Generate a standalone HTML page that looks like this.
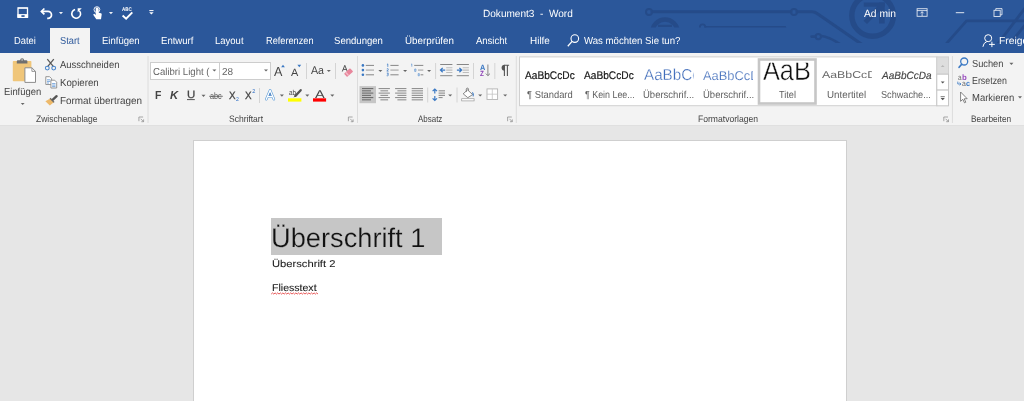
<!DOCTYPE html>
<html lang="de"><head><meta charset="utf-8"><title>Dokument3 - Word</title>
<style>
html,body{margin:0;padding:0;}
body{width:1024px;height:401px;overflow:hidden;position:relative;background:#e6e6e6;font-family:"Liberation Sans",sans-serif;}
.abs{position:absolute;}
#titlebar{position:absolute;left:0;top:0;width:1024px;height:53px;background:#2b579a;overflow:hidden;}
#tab-start{position:absolute;left:50px;top:28px;width:40px;height:25px;background:#f3f3f3;}
#ribbon{position:absolute;left:0;top:53px;width:1024px;height:72px;background:#f3f3f3;border-bottom:1px solid #e0e0e0;}
#docarea{position:absolute;left:0;top:126px;width:1024px;height:275px;background:#e6e6e6;}
#page{position:absolute;left:193px;top:140px;width:654px;height:270px;background:#fff;border:1px solid #cfcfcf;box-sizing:border-box;}
#sel{position:absolute;left:271.3px;top:217.9px;width:171.1px;height:37px;background:#c6c6c6;}
.t{position:absolute;white-space:pre;line-height:1;transform-origin:0 0;font-family:"Liberation Sans",sans-serif;}
.vsep{position:absolute;width:1px;background:#d9d9d9;}
svg{position:absolute;left:0;top:0;overflow:visible;}
#labels{position:absolute;left:0;top:0;width:1024px;height:401px;will-change:transform;}
.t{text-rendering:geometricPrecision;}

</style></head>
<body>
<div id="titlebar">
  <svg id="bgpattern" width="1024" height="42.5" viewBox="0 0 1024 42.5" style="overflow:hidden" fill="none" stroke="#254b89" stroke-linecap="round" stroke-linejoin="round">
    <!-- circuit pattern (Office background) -->
    <path d="M652 11.800 H791 M797 11.800 H812 Q815 11.800 817.500 13.800 L862 44.500" stroke-width="3.100"/>
    <circle cx="649" cy="11.900" r="3" stroke-width="2"/>
    <circle cx="794" cy="11.900" r="3" stroke-width="2"/>
    <clipPath id="cliptop"><rect x="0" y="0" width="1024" height="27.600"/></clipPath>
    <g clip-path="url(#cliptop)">
      <circle cx="665" cy="32" r="12.500" stroke-width="4.600"/>
      <path d="M658 25.900 H672" stroke-width="2.400" stroke-linecap="butt"/>
      <path d="M705.500 27.300 H785" stroke-width="2.400"/>
      <circle cx="702.600" cy="27" r="2.700" stroke-width="1.800"/>
    </g>
    <circle cx="818.300" cy="36.600" r="2.700" stroke-width="2"/>
    <path d="M811.500 36.600 H815 M821.500 36 Q828 36.500 840 44" stroke-width="2.600"/>
    <circle cx="872.600" cy="15.500" r="20.800" stroke-width="5.400"/>
    <path d="M865.300 22.400 L880 7" stroke-width="4.800" stroke-linecap="butt"/><rect x="863.800" y="2.500" width="20.900" height="4.200" fill="#254b89" stroke="none"/><rect x="879" y="2.500" width="5.700" height="21" fill="#254b89" stroke="none"/>
    <path d="M1026 20.900 H966.500 L945 45.200" stroke-width="2.700"/>
    <path d="M1025 8 L997 45 M1025 25 L1009 45" stroke-width="2.800"/>
  </svg>
  <div id="tab-start"></div>
  <svg id="qat" width="1024" height="53" viewBox="0 0 1024 53" fill="none" stroke="#fff" stroke-width="1.2">
    <!-- save -->
    <path d="M18 17.500 V8 H27.500 V17.500" stroke-width="1.300"/>
    <path d="M18 8 H27.500" stroke-width="0.9" stroke-opacity="0.800"/>
    <rect x="17.400" y="14.100" width="10.700" height="3.900" fill="#fff" stroke="none"/>
    <rect x="21.400" y="15.200" width="3.200" height="1.700" fill="#2b579a" stroke="none"/>
    <!-- undo -->
    <path d="M41.800 11.400 H48 A3.500 3.500 0 0 1 48 18.400 H47.200" stroke-width="1.700" stroke-linecap="butt"/>
    <path d="M44.400 8.500 L41.400 11.400 L44.400 14.300" stroke-width="1.700"/>
    <path d="M58.900 12 h4.100 l-2.050 2.200 z" fill="#fff" stroke="none" fill-opacity="0.9"/>
    <!-- redo / repeat -->
    <path d="M75.100 9.540 A4.400 4.400 0 1 0 79.300 10.700" stroke-width="1.600"/>
    <path d="M77.700 8.200 H81.800 L77.700 12.300 Z" fill="#fff" stroke="none"/>
    <!-- touch mode -->
    <path transform="translate(0.100,0.900)" d="M95.200 7.300 a1.900 1.900 0 0 1 3.400 1.300 v3.300 l2.300 .5 q.9 .3 .7 1.300 l-.7 4.600 h-4.700 l-2.900 -4.100 q-.5 -.9 .4 -1.200 q.7 -.2 1.300 .5 l.6 .700 v-5.600 q0 -.9 .9 -.9 q.9 0 .9 .9" fill="#fff" stroke="none"/>
    <circle cx="96.900" cy="9.600" r="2.900" stroke-width="0.9"/>
    <path d="M108.900 12.100 h4.100 l-2.050 2.200 z" fill="#fff" stroke="none" fill-opacity="0.9"/>
    <!-- spelling -->
    <path d="M122.600 15.500 L126.100 18.700 L132.300 12.300" stroke-width="1.900"/>
    <!-- customize -->
    <path d="M149.300 10.600 h4.200" stroke-width="1"/>
    <path d="M149.200 12.300 h4.400 l-2.200 2.300 z" fill="#fff" stroke="none"/>
    <!-- tell me magnifier -->
    <circle cx="574.800" cy="38.600" r="3.800" stroke-width="1.100"/>
    <path d="M572.100 41.400 L567.800 46.200" stroke-width="1.300"/>
    <!-- ribbon display options -->
    <rect x="917.100" y="8.700" width="10" height="7.600" stroke-width="0.9" stroke-opacity="0.85"/>
    <path d="M917.100 10.600 h10" stroke-width="0.9" stroke-opacity="0.85"/>
    <path d="M922.100 16 v-4.300 m-1.700 1.700 l1.700 -1.700 l1.700 1.700" stroke-width="0.8" stroke-opacity="0.9"/>
    <!-- minimize -->
    <path d="M955.800 12.700 h8.400" stroke-width="1" stroke-opacity="0.85"/>
    <!-- restore -->
    <rect x="994" y="10.300" width="6.200" height="6.200" stroke-width="0.9" stroke-opacity="0.85"/>
    <path d="M995.800 10.300 v-1.700 h6.200 v6.200 h-1.800" stroke-width="0.9" stroke-opacity="0.85"/>
    <!-- share -->
    <circle cx="988.200" cy="38.200" r="3.500" stroke-width="1"/>
    <path d="M982.900 46.800 q.5 -4 3.900 -5.200" stroke-width="1"/>
    <path d="M989 44.400 h5.800 m-2.900 -2.700 v5.400" stroke-width="1"/>
  </svg>
</div>
<div id="ribbon"></div>
<svg id="ribbonicons" width="1024" height="401" viewBox="0 0 1024 401" fill="none">
<path d="M148 56 V123" stroke="#dcdcdc" stroke-width="1"/>
<path d="M357.5 56 V123" stroke="#dcdcdc" stroke-width="1"/>
<path d="M516.3 56 V123" stroke="#dcdcdc" stroke-width="1"/>
<path d="M952.4 56 V123" stroke="#dcdcdc" stroke-width="1"/>
<!-- paste -->
<rect x="12.8" y="61" width="18.6" height="20.3" rx="0.8" fill="#f0c67a"/>
<path d="M16.8 63.600 v-2.400 q0 -1 1 -1 h2.300 q.1 -2 2 -2 q1.900 0 2 2 h2.300 q1 0 1 1 v2.400 z" fill="#6f6f6f"/>
<circle cx="22.100" cy="59.900" r="0.700" fill="#f3f3f3"/>
<path d="M24.900 67.800 h7 l3.600 3.600 v11 h-10.600 z" fill="#fff" stroke="#8c8c8c" stroke-width="1"/>
<path d="M31.900 67.800 v3.600 h3.600" stroke="#8c8c8c" stroke-width="0.9"/>
<path d="M20.80 102.90 h3.8 l-1.9 2.0 z" fill="#666" stroke="none"/>
<!-- cut -->
<path d="M47.300 59.200 L53.500 66.600 M53.800 59.200 L47.600 66.600" stroke="#5a5a5a" stroke-width="1.300"/>
<circle cx="47.300" cy="68.100" r="1.900" stroke="#4a86cc" stroke-width="1.100"/>
<circle cx="53.700" cy="68.100" r="1.900" stroke="#4a86cc" stroke-width="1.100"/>
<!-- copy -->
<path d="M45.800 76.700 h3.800 l2 2 v5.800 h-5.800 z" fill="#fff" stroke="#8a8a8a" stroke-width="0.9"/>
<path d="M47 79.800 h3.400 M47 81.400 h3.400 M47 83 h2" stroke="#5b93d3" stroke-width="0.8"/>
<path d="M50.900 80.200 h3.800 l2 2 v5.800 h-5.800 z" fill="#fff" stroke="#8a8a8a" stroke-width="0.9"/>
<path d="M52.100 83.600 h3.400 M52.100 85.100 h3.400 M52.100 86.600 h3.400" stroke="#5b93d3" stroke-width="0.8"/>
<!-- format painter -->
<path d="M56.600 96.200 L52.600 99.800" stroke="#555" stroke-width="2.400" stroke-linecap="round"/>
<path d="M50.300 98.600 L53.800 102.300 L49.800 105.400 L45.400 101.200 Z" fill="#edb96a"/>
<path d="M50.100 98.300 L54.100 102.400" stroke="#666" stroke-width="1.300"/>
<path d="M138.90 121.20 V117.00 H143.10" stroke="#858585" stroke-width="0.7" fill="none"/><path d="M140.70 118.80 L143.40 121.50 M143.60 119.40 V121.70 H141.30" stroke="#858585" stroke-width="0.7" fill="none"/>
<!-- font combos -->
<rect x="150.500" y="62.500" width="120" height="17" fill="#fff" stroke="#cdcdcd" stroke-width="1"/>
<path d="M219.500 62.500 v17" stroke="#cdcdcd" stroke-width="1"/>
<path d="M212.40 69.40 h4 l-2.0 2.2 z" fill="#666" stroke="none"/>
<path d="M264.00 69.40 h4 l-2.0 2.2 z" fill="#666" stroke="none"/>
<path d="M281.100 67.200 h3.800 l-1.900 -2.400 z" fill="#3a78c3"/>
<path d="M297.400 64.800 h3.800 l-1.900 2.400 z" fill="#3a78c3"/>
<path d="M306.5 63 V79" stroke="#d4d4d4" stroke-width="1"/>
<path d="M326.80 69.90 h4 l-2.0 2.2 z" fill="#666" stroke="none"/>
<path d="M335.5 63 V79" stroke="#d4d4d4" stroke-width="1"/>
<!-- clear formatting -->
<path d="M342.300 71.500 L344.800 65.300 L347.300 71.500 M343.200 69.400 H346.400" stroke="#555" stroke-width="1"/>
<g transform="rotate(-42 348.600 72.600)"><rect x="344.500" y="70.300" width="8.200" height="4.600" rx="0.7" fill="#e8869c"/><rect x="346" y="70.300" width="1.300" height="4.600" fill="#f4bcc8"/></g>
<path d="M187 99.600 h7.800" stroke="#444" stroke-width="0.9"/>
<path d="M201.50 94.80 h4 l-2.0 2.2 z" fill="#666" stroke="none"/>
<path d="M209.200 96.300 h13.600" stroke="#555" stroke-width="0.8"/>
<path d="M259.5 88 V103" stroke="#d4d4d4" stroke-width="1"/>
<!-- text effects -->
<path d="M266.300 99.300 L270.100 90.200 L273.900 99.300 M267.700 96.300 H272.500" stroke="#5b9bd8" stroke-width="2.500" stroke-linejoin="round" stroke-linecap="round"/>
<path d="M266.300 99.300 L270.100 90.200 L273.900 99.300 M267.700 96.300 H272.500" stroke="#fff" stroke-width="1.300" stroke-linejoin="round" stroke-linecap="round"/>
<path d="M269 96 L270.100 93.400 L271.200 96" stroke="#2e66b0" stroke-width="0.600"/>
<path d="M279.90 94.60 h4 l-2.0 2.2 z" fill="#666" stroke="none"/>
<!-- highlight -->
<path d="M300.700 90.200 L295.400 95.900" stroke="#555" stroke-width="2.300" stroke-linecap="round"/>
<path d="M295.200 95.200 L293.400 97.600 L296 96.600 Z" fill="#555"/>
<rect x="288" y="98.300" width="13.400" height="3.300" fill="#ffff00"/>
<path d="M305.30 94.60 h4 l-2.0 2.2 z" fill="#666" stroke="none"/>
<rect x="313" y="98.300" width="13.100" height="3.300" fill="#ff0000"/>
<path d="M330.30 94.60 h4 l-2.0 2.2 z" fill="#666" stroke="none"/>
<path d="M348.40 121.20 V117.00 H352.60" stroke="#858585" stroke-width="0.7" fill="none"/><path d="M350.20 118.80 L352.90 121.50 M353.10 119.40 V121.70 H350.80" stroke="#858585" stroke-width="0.7" fill="none"/>
<!-- bullets -->
<circle cx="362.900" cy="65.4" r="1.300" fill="#3a78c3"/>
<circle cx="362.900" cy="70.1" r="1.300" fill="#3a78c3"/>
<circle cx="362.900" cy="74.8" r="1.300" fill="#3a78c3"/>
<path d="M365.800 65.400 h8.200 M365.800 74.800 h8.200" stroke="#6a6a6a" stroke-width="0.8"/>
<path d="M365.800 70.100 h8.200" stroke="#bdbdbd" stroke-width="1.600"/>
<path d="M378.40 69.90 h4 l-2.0 2.2 z" fill="#666" stroke="none"/>
<!-- numbering -->
<path d="M390.400 65.400 h8.200 M390.400 74.800 h8.200" stroke="#6a6a6a" stroke-width="0.8"/>
<path d="M390.400 70.100 h8.200" stroke="#bdbdbd" stroke-width="1.600"/>
<path d="M386.900 64.600 l.9 -.700 v3 M386.800 68.900 q1.100 -.8 1.500 0 q.2 .7 -1.500 2.200 h1.800 M386.800 73.100 h1.600 l-.9 1.200 q1.100 0 1 .9 q-.3 .9 -1.800 .5" stroke="#3a78c3" stroke-width="0.750"/>
<path d="M403.10 69.90 h4 l-2.0 2.2 z" fill="#666" stroke="none"/>
<!-- multilevel -->
<path d="M414.200 65.400 h9.100 M420.600 74.800 h2.700" stroke="#6a6a6a" stroke-width="0.8"/>
<path d="M418 70.100 h5.300" stroke="#bdbdbd" stroke-width="1.600"/>
<path d="M411 64.600 l.8 -.700 v2.800 M414.700 69 h1.200 v2.400 h-1.200 z M418.200 73.600 h1.100 v2.200 h-1.100 z" stroke="#5b93d3" stroke-width="0.700"/>
<path d="M427.10 69.90 h4 l-2.0 2.2 z" fill="#666" stroke="none"/>
<path d="M435.6 63 V79" stroke="#d4d4d4" stroke-width="1"/>
<!-- decrease indent -->
<path d="M440.200 64.500 h12.200 M440.200 75.700 h12.200" stroke="#6a6a6a" stroke-width="0.8"/>
<path d="M446.200 67.700 h6.200 M446.200 70.100 h6.200 M446.200 72.500 h6.200" stroke="#bdbdbd" stroke-width="1.100"/>
<path d="M445.200 70.100 h-4.300 M442.700 67.900 l-2.200 2.200 l2.200 2.200" stroke="#3a78c3" stroke-width="1.300"/>
<!-- increase indent -->
<path d="M456.700 64.500 h12.200 M456.700 75.700 h12.200" stroke="#6a6a6a" stroke-width="0.8"/>
<path d="M462.700 67.700 h6.200 M462.700 70.100 h6.200 M462.700 72.500 h6.200" stroke="#bdbdbd" stroke-width="1.100"/>
<path d="M456.900 70.100 h4.300 M459.400 67.900 l2.200 2.200 l-2.200 2.200" stroke="#3a78c3" stroke-width="1.300"/>
<path d="M473.5 63 V79" stroke="#d4d4d4" stroke-width="1"/>
<!-- sort -->
<path d="M487.900 64.500 v11 M485.800 73.600 l2.100 2.100 l2.100 -2.100" stroke="#6a6a6a" stroke-width="0.8"/>
<path d="M494.8 63 V79" stroke="#d4d4d4" stroke-width="1"/>
<!-- pilcrow -->
<path d="M504.400 65.200 v10.700 M507.400 65.200 v10.700 M509.100 65.200 h-5" stroke="#555" stroke-width="1.100"/>
<path d="M504.600 64.700 a3 3 0 0 0 0 6 z" fill="#555"/>
<rect x="359.500" y="86.100" width="16.500" height="17.100" fill="#c6c6c6"/>
<path d="M362.00 88.6 H373.30 M362.00 90.85 H371.00 M362.00 93.1 H373.30 M362.00 95.35 H371.00 M362.00 97.6 H373.30 M362.00 99.85 H371.00" stroke="#5a5a5a" stroke-width="0.9"/>
<path d="M378.60 88.6 H389.90 M380.40 90.85 H388.10 M378.60 93.1 H389.90 M380.40 95.35 H388.10 M378.60 97.6 H389.90 M380.40 99.85 H388.10" stroke="#6a6a6a" stroke-width="0.8"/>
<path d="M395.10 88.6 H406.40 M397.40 90.85 H406.40 M395.10 93.1 H406.40 M397.40 95.35 H406.40 M395.10 97.6 H406.40 M397.40 99.85 H406.40" stroke="#6a6a6a" stroke-width="0.8"/>
<path d="M411.70 88.6 H423.00 M411.70 90.85 H423.00 M411.70 93.1 H423.00 M411.70 95.35 H423.00 M411.70 97.6 H423.00 M411.70 99.85 H423.00" stroke="#6a6a6a" stroke-width="0.8"/>
<path d="M427.7 87.5 V102.5" stroke="#d4d4d4" stroke-width="1"/>
<!-- line spacing -->
<path d="M434.800 89 v4.500 M434.800 96 v4.500 M432.600 91.200 l2.200 -2.200 l2.200 2.200 M432.600 98.300 l2.200 2.200 l2.200 -2.200" stroke="#3a78c3" stroke-width="1.200"/>
<path d="M438.600 90.850 h6.400 M438.600 93.100 h6.400 M438.600 95.350 h6.400 M438.600 97.600 h4" stroke="#777" stroke-width="0.9"/>
<path d="M448.20 94.40 h4 l-2.0 2.2 z" fill="#666" stroke="none"/>
<path d="M457 87.5 V102.5" stroke="#d4d4d4" stroke-width="1"/>
<!-- shading -->
<path d="M467.600 89.900 L472.600 94.600 L467.800 97.700 L463.200 93.800 Z" fill="#fff" stroke="#6a6a6a" stroke-width="0.8"/>
<path d="M466.300 91.800 v-2.600 q.1 -1.100 1.100 -1.100 q1 0 1.100 1.100 v1.300" stroke="#666" stroke-width="0.8"/>
<path d="M472.400 92.400 q1.600 1.700 .7 4" stroke="#3a78c3" stroke-width="1.100"/>
<rect x="461.700" y="98.700" width="12.400" height="2.200" fill="#fff" stroke="#9a9a9a" stroke-width="0.7"/>
<path d="M478.20 94.40 h4 l-2.0 2.2 z" fill="#666" stroke="none"/>
<!-- borders -->
<rect x="487" y="88.900" width="10.600" height="10.600" fill="#fff" stroke="#b4b4b4" stroke-width="0.9"/>
<path d="M492.300 88.900 v10.600 M487 94.200 h10.600" stroke="#c4c4c4" stroke-width="0.8"/>
<path d="M503.20 94.40 h4 l-2.0 2.2 z" fill="#666" stroke="none"/>
<path d="M507.60 121.20 V117.00 H511.80" stroke="#858585" stroke-width="0.7" fill="none"/><path d="M509.40 118.80 L512.10 121.50 M512.30 119.40 V121.70 H510.00" stroke="#858585" stroke-width="0.7" fill="none"/>
<rect x="519.500" y="56.900" width="417.300" height="48.800" fill="#fff" stroke="#d0d0d0" stroke-width="1"/>
<rect x="759" y="59.500" width="56.500" height="44" fill="#fff" stroke="#c6c6c6" stroke-width="2.600"/>
<rect x="936.800" y="56.900" width="11.700" height="17.300" fill="#dedede" stroke="#d0d0d0" stroke-width="1"/>
<rect x="936.800" y="74.200" width="11.700" height="15.900" fill="#fff" stroke="#c6c6c6" stroke-width="1"/>
<rect x="936.800" y="90.100" width="11.700" height="15.700" fill="#fff" stroke="#c6c6c6" stroke-width="1"/>
<path d="M940.800 66.900 h3.800 l-1.900 -2 z" fill="#b8b8b8"/>
<path d="M940.80 81.60 h3.8 l-1.9 2.0 z" fill="#555" stroke="none"/>
<path d="M940.600 96.700 h4.200" stroke="#555" stroke-width="0.8"/>
<path d="M940.60 98.00 h4.2 l-2.1 2.2 z" fill="#555" stroke="none"/>
<path d="M943.80 121.20 V117.00 H948.00" stroke="#858585" stroke-width="0.7" fill="none"/><path d="M945.60 118.80 L948.30 121.50 M948.50 119.40 V121.70 H946.20" stroke="#858585" stroke-width="0.7" fill="none"/>
<circle cx="964.200" cy="61.500" r="3.500" stroke="#3a78c3" stroke-width="1.300"/>
<path d="M961.700 64.200 L959.100 67.300" stroke="#3a78c3" stroke-width="1.700" stroke-linecap="round"/>
<path d="M1009.40 62.80 h4 l-2.0 2.2 z" fill="#666" stroke="none"/>
<path d="M957.800 81.600 v2.400 h3 M959.600 82.700 l1.400 1.300 l-1.400 1.300" stroke="#3a78c3" stroke-width="0.8"/>
<path d="M960.600 92 V101.300 L962.800 99.300 L964.500 102.800 L965.800 102.200 L964.200 98.800 L967.200 98.700 Z" fill="#fff" stroke="#666" stroke-width="0.8" stroke-linejoin="round"/>
<path d="M1018.00 96.30 h4 l-2.0 2.2 z" fill="#666" stroke="none"/>
</svg>
<div id="docarea"></div>
<div id="page"></div>
<div id="sel"></div>
<svg id="squiggle" width="1024" height="401" viewBox="0 0 1024 401" fill="none"><path d="M271.200 294.100 L272.50 292.9 L273.80 294.1 L275.10 292.9 L276.40 294.1 L277.70 292.9 L279.00 294.1 L280.30 292.9 L281.60 294.1 L282.90 292.9 L284.20 294.1 L285.50 292.9 L286.80 294.1 L288.10 292.9 L289.40 294.1 L290.70 292.9 L292.00 294.1 L293.30 292.9 L294.60 294.1 L295.90 292.9 L297.20 294.1 L298.50 292.9 L299.80 294.1 L301.10 292.9 L302.40 294.1 L303.70 292.9 L305.00 294.1 L306.30 292.9 L307.60 294.1 L308.90 292.9 L310.20 294.1 L311.50 292.9 L312.80 294.1 L314.10 292.9 L315.40 294.1 L316.70 292.9 L318.00 294.1" stroke="#e02020" stroke-width="0.750"/></svg>

<div id="labels">
<span class="t" style="left:482.50px;top:10.00px;font-size:10.4px;color:#ffffff;transform:scaleX(0.9677);">Dokument3  -  Word</span>
<span class="t" style="left:863.60px;top:10.00px;font-size:10.4px;color:#ffffff;transform:scaleX(0.9906);">Ad min</span>
<span class="t" style="left:122.00px;top:8.00px;font-size:5.3px;color:#ffffff;transform:scaleX(0.8500);font-weight:bold;">ABC</span>
<span class="t" style="left:13.70px;top:37.00px;font-size:10.2px;color:#ffffff;transform:scaleX(0.9167);">Datei</span>
<span class="t" style="left:60.00px;top:37.00px;font-size:10.2px;color:#2b579a;transform:scaleX(0.9091);">Start</span>
<span class="t" style="left:101.60px;top:37.00px;font-size:10.2px;color:#ffffff;transform:scaleX(0.9350);">Einfügen</span>
<span class="t" style="left:160.50px;top:37.00px;font-size:10.2px;color:#ffffff;transform:scaleX(0.9400);">Entwurf</span>
<span class="t" style="left:215.20px;top:37.00px;font-size:10.2px;color:#ffffff;transform:scaleX(0.9323);">Layout</span>
<span class="t" style="left:265.80px;top:37.00px;font-size:10.2px;color:#ffffff;transform:scaleX(0.9019);">Referenzen</span>
<span class="t" style="left:334.40px;top:37.00px;font-size:10.2px;color:#ffffff;transform:scaleX(0.9385);">Sendungen</span>
<span class="t" style="left:405.30px;top:37.00px;font-size:10.2px;color:#ffffff;transform:scaleX(0.9608);">Überprüfen</span>
<span class="t" style="left:476.20px;top:37.00px;font-size:10.2px;color:#ffffff;transform:scaleX(0.9294);">Ansicht</span>
<span class="t" style="left:529.90px;top:37.00px;font-size:10.2px;color:#ffffff;transform:scaleX(0.9750);">Hilfe</span>
<span class="t" style="left:583.80px;top:37.00px;font-size:10.2px;color:#ffffff;transform:scaleX(0.9441);">Was möchten Sie tun?</span>
<span class="t" style="left:999.40px;top:37.00px;font-size:10.2px;color:#ffffff;transform:scaleX(1.0130);">Freigeben</span>
<span class="t" style="left:3.80px;top:88.00px;font-size:10.2px;color:#444444;transform:scaleX(0.9250);">Einfügen</span>
<span class="t" style="left:59.80px;top:61.00px;font-size:10.2px;color:#444444;transform:scaleX(0.9281);">Ausschneiden</span>
<span class="t" style="left:59.80px;top:79.00px;font-size:10.2px;color:#444444;transform:scaleX(0.9475);">Kopieren</span>
<span class="t" style="left:59.80px;top:97.00px;font-size:10.2px;color:#444444;transform:scaleX(0.9714);">Format übertragen</span>
<span class="t" style="left:36.40px;top:114.00px;font-size:9.4px;color:#444444;transform:scaleX(0.9075);">Zwischenablage</span>
<span class="t" style="left:228.50px;top:114.00px;font-size:9.4px;color:#444444;transform:scaleX(0.9079);">Schriftart</span>
<span class="t" style="left:417.50px;top:114.00px;font-size:9.4px;color:#444444;transform:scaleX(0.8483);">Absatz</span>
<span class="t" style="left:698.00px;top:114.00px;font-size:9.4px;color:#444444;transform:scaleX(0.9136);">Formatvorlagen</span>
<span class="t" style="left:970.80px;top:114.00px;font-size:9.4px;color:#444444;transform:scaleX(0.8844);">Bearbeiten</span>
<span class="t" style="left:153.00px;top:68.00px;font-size:10.2px;color:#666666;transform:scaleX(0.9417);">Calibri Light (</span>
<span class="t" style="left:222.40px;top:68.00px;font-size:10.2px;color:#666666;transform:scaleX(0.9818);">28</span>
<span class="t" style="left:154.90px;top:90.00px;font-size:11.8px;color:#444;transform:scaleX(0.8857);font-weight:bold;">F</span>
<span class="t" style="left:170.20px;top:90.00px;font-size:11.8px;color:#444;transform:scaleX(0.9556);font-weight:bold;font-style:italic;">K</span>
<span class="t" style="left:187.10px;top:90.00px;font-size:10.6px;color:#444;transform:scaleX(1.0857);-webkit-text-stroke:0.25px #444;">U</span>
<span class="t" style="left:210.30px;top:91.00px;font-size:9.4px;color:#555;transform:scaleX(0.7667);">abc</span>
<span class="t" style="left:228.50px;top:91.00px;font-size:10.6px;color:#444;transform:scaleX(0.9286);-webkit-text-stroke:0.3px #444;">X</span>
<span class="t" style="left:235.60px;top:98.00px;font-size:5.6px;color:#2b6cc4;transform:scaleX(0.9333);">2</span>
<span class="t" style="left:245.00px;top:91.00px;font-size:10.6px;color:#444;transform:scaleX(0.9286);-webkit-text-stroke:0.3px #444;">X</span>
<span class="t" style="left:252.20px;top:90.00px;font-size:5.6px;color:#2b6cc4;transform:scaleX(1.0000);">2</span>
<span class="t" style="left:273.90px;top:65.00px;font-size:13.2px;color:#444;transform:scaleX(0.9556);">A</span>
<span class="t" style="left:290.60px;top:68.00px;font-size:10.6px;color:#444;transform:scaleX(1.0286);">A</span>
<span class="t" style="left:311.10px;top:66.00px;font-size:11.4px;color:#444;transform:scaleX(0.9357);">Aa</span>
<span class="t" style="left:314.70px;top:90.00px;font-size:11.2px;color:#444;transform:scaleX(1.3000);">A</span>
<span class="t" style="left:288.60px;top:89.00px;font-size:7.4px;color:#444;transform:scaleX(0.8625);">ab</span>
<span class="t" style="left:524.90px;top:71.00px;font-size:11px;color:#111;transform:scaleX(0.9241);-webkit-text-stroke:0.15px #111;">AaBbCcDc</span>
<span class="t" style="left:584.30px;top:71.00px;font-size:11px;color:#111;transform:scaleX(0.9241);-webkit-text-stroke:0.15px #111;">AaBbCcDc</span>
<span class="t" style="left:643.50px;top:68.00px;font-size:15.8px;color:#3f6cba;transform:scaleX(0.9621);-webkit-text-stroke:0.3px #fff;clip-path:polygon(-5px -50.00px, 51.45px -50.00px, 51.45px 200px, -5px 200px);">AaBbCc</span>
<span class="t" style="left:702.90px;top:70.00px;font-size:12.8px;color:#3f6cba;transform:scaleX(1.0071);-webkit-text-stroke:0.2px #fff;clip-path:polygon(-5px -50.00px, 49.74px -50.00px, 49.74px 200px, -5px 200px);">AaBbCcD</span>
<span class="t" style="left:762.90px;top:56.00px;font-size:29.5px;color:#111;transform:scaleX(0.8574);-webkit-text-stroke:0.5px #fff;clip-path:polygon(-5px 6.80px, 5000.00px 6.80px, 5000.00px 200px, -5px 200px);">AaB</span>
<span class="t" style="left:821.70px;top:71.00px;font-size:9.9px;color:#6a6a6a;transform:scaleX(1.2488);clip-path:polygon(-5px -50.00px, 39.96px -50.00px, 39.96px 200px, -5px 200px);">AaBbCcD</span>
<span class="t" style="left:882.15px;top:71.00px;font-size:10.6px;color:#444;transform:scaleX(0.9453);font-style:italic;-webkit-text-stroke:0.15px #444;">AaBbCcDa</span>
<span class="t" style="left:526.80px;top:91.00px;font-size:10.2px;color:#5e5e5e;transform:scaleX(0.9204);">¶ Standard</span>
<span class="t" style="left:584.80px;top:91.00px;font-size:10.2px;color:#5e5e5e;transform:scaleX(0.8714);">¶ Kein Lee...</span>
<span class="t" style="left:643.00px;top:91.00px;font-size:10.2px;color:#5e5e5e;transform:scaleX(0.9333);">Überschrif...</span>
<span class="t" style="left:702.70px;top:91.00px;font-size:10.2px;color:#5e5e5e;transform:scaleX(0.9315);">Überschrif...</span>
<span class="t" style="left:778.80px;top:91.00px;font-size:10.2px;color:#5e5e5e;transform:scaleX(0.9000);">Titel</span>
<span class="t" style="left:826.80px;top:91.00px;font-size:10.2px;color:#5e5e5e;transform:scaleX(0.9585);">Untertitel</span>
<span class="t" style="left:881.20px;top:91.00px;font-size:10.2px;color:#5e5e5e;transform:scaleX(0.8964);">Schwache...</span>
<span class="t" style="left:972.10px;top:60.00px;font-size:10.2px;color:#444444;transform:scaleX(0.9088);">Suchen</span>
<span class="t" style="left:972.10px;top:77.00px;font-size:10.2px;color:#444444;transform:scaleX(0.8675);">Ersetzen</span>
<span class="t" style="left:972.10px;top:94.00px;font-size:10.2px;color:#444444;transform:scaleX(0.9311);">Markieren</span>
<span class="t" style="left:271.47px;top:225.00px;font-size:26.8px;color:#111;transform:scaleX(1.0161);-webkit-text-stroke:0.25px #c6c6c6;">Überschrift 1</span>
<span class="t" style="left:272.20px;top:260.00px;font-size:9.8px;color:#1a1a1a;transform:scaleX(1.1418);-webkit-text-stroke:0.08px #1a1a1a;">Überschrift 2</span>
<span class="t" style="left:272.20px;top:284.00px;font-size:9.9px;color:#161616;transform:scaleX(1.0690);-webkit-text-stroke:0.08px #161616;">Fliesstext</span>
<span class="t" style="left:479.90px;top:64.00px;font-size:7.6px;color:#3a78c3;transform:scaleX(0.9600);font-weight:bold;">A</span>
<span class="t" style="left:480.20px;top:70.00px;font-size:7.6px;color:#8b3fb5;transform:scaleX(0.8400);font-weight:bold;">Z</span>
<span class="t" style="left:957.70px;top:74.00px;font-size:7.8px;color:#666;transform:scaleX(0.8250);">a</span>
<span class="t" style="left:961.90px;top:74.00px;font-size:7.8px;color:#9a4fc0;transform:scaleX(1.0000);font-weight:bold;">b</span>
<span class="t" style="left:962.10px;top:80.00px;font-size:7.8px;color:#666;transform:scaleX(0.8750);">a</span>
<span class="t" style="left:966.10px;top:80.00px;font-size:7.8px;color:#3a78c3;transform:scaleX(0.9250);font-weight:bold;">c</span>
</div>
</body></html>
